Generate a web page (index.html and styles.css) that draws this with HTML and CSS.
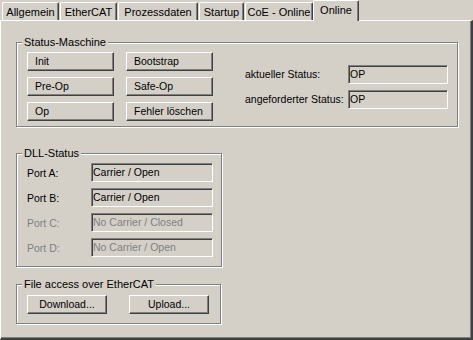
FILE: index.html
```html
<!DOCTYPE html>
<html>
<head>
<meta charset="utf-8">
<link rel="stylesheet" href="styles.css">
</head>
<body>
<div class="dialog">
  <div class="tabs">
    <div class="tab tab-allgemein">Allgemein</div>
    <div class="tab tab-ethercat">EtherCAT</div>
    <div class="tab tab-prozess">Prozessdaten</div>
    <div class="tab tab-startup">Startup</div>
    <div class="tab tab-coe">CoE - Online</div>
    <div class="tab tab-online active">Online</div>
  </div>
  <div class="panel">
    <fieldset class="group group-status">
      <legend>Status-Maschine</legend>
      <div class="status-body">
        <div class="btn-grid">
          <button class="btn">Init</button>
          <button class="btn">Bootstrap</button>
          <button class="btn">Pre-Op</button>
          <button class="btn">Safe-Op</button>
          <button class="btn">Op</button>
          <button class="btn">Fehler löschen</button>
        </div>
        <div class="status-fields">
          <span class="lbl">aktueller Status:</span>
          <div class="field">OP</div>
          <span class="lbl">angeforderter Status:</span>
          <div class="field">OP</div>
        </div>
      </div>
    </fieldset>

    <fieldset class="group group-dll">
      <legend>DLL-Status</legend>
      <div class="ports">
        <span class="lbl">Port A:</span>
        <div class="field">Carrier / Open</div>
        <span class="lbl">Port B:</span>
        <div class="field">Carrier / Open</div>
        <span class="lbl disabled">Port C:</span>
        <div class="field disabled">No Carrier / Closed</div>
        <span class="lbl disabled">Port D:</span>
        <div class="field disabled">No Carrier / Open</div>
      </div>
    </fieldset>

    <fieldset class="group group-file">
      <legend>File access over EtherCAT</legend>
      <div class="file-body">
        <button class="btn btn-center">Download...</button>
        <button class="btn btn-center">Upload...</button>
      </div>
    </fieldset>
  </div>
</div>
</body>
</html>
```
FILE: styles.css
```css
html, body {
  margin: 0;
  padding: 0;
  background: #D4D0C8;
}

body {
  font-family: "Liberation Sans", Arial, sans-serif;
  font-size: 10.5px;
  color: #000;
}

.dialog {
  width: 473px;
  height: 340px;
  display: flex;
  flex-direction: column;
}

/* ---------- tabs ---------- */
.tabs {
  display: flex;
  align-items: flex-end;
  height: 20px;
  padding-left: 2px;
  position: relative;
  z-index: 2;
}

.tab {
  box-sizing: border-box;
  height: 18px;
  margin-right: 1px;
  padding-top: 3px;
  line-height: 13px;
  font-size: 11px;
  text-align: center;
  white-space: nowrap;
  border-left: 1px solid #fff;
  border-top: 1px solid #fff;
  border-right: 1px solid #404040;
  border-radius: 2px 2px 0 0;
  box-shadow: inset -1px 0 0 #808080;
  background: #D4D0C8;
}

.tab-allgemein { width: 57px; }
.tab-ethercat { width: 57px; }
.tab-prozess { width: 80px; }
.tab-startup { width: 45px; }
.tab-coe { width: 68px; margin-right: 0; }
.tab-online { width: 46px; }

.tab.active {
  height: 21px;
  margin-bottom: -1px;
}

/* ---------- panel ---------- */
.panel {
  box-sizing: border-box;
  flex: 1;
  width: 473px;
  padding: 15px 0 0 15px;
  border-left: 1px solid #fff;
  border-top: 1px solid #fff;
  border-right: 2px solid #404040;
  border-bottom: 2px solid #404040;
  box-shadow: inset -1px -1px 0 #808080;
  display: flex;
  flex-direction: column;
  align-items: flex-start;
}

/* ---------- group boxes ---------- */
.group {
  box-sizing: border-box;
  margin: 0;
  min-width: 0;
  padding: 0 0 5px 5px;
  border: 1px solid #808080;
  box-shadow: inset 1px 1px 0 #fff, 1px 1px 0 #fff;
}

.group legend {
  padding: 0 2px;
  line-height: 13px;
  font-size: 11px;
  background: #D4D0C8;
}

.group-status {
  width: 442px;
}

.group-dll {
  width: 206px;
  margin-top: 20px;
  padding-bottom: 9px;
}

.group-file {
  width: 205px;
  margin-top: 11px;
  padding-bottom: 9px;
}

/* ---------- status machine ---------- */
.status-body {
  display: flex;
  align-items: center;
  padding: 3px 0 0 5px;
}

.btn-grid {
  display: grid;
  grid-template-columns: 87px 87px;
  grid-auto-rows: 19px;
  column-gap: 12px;
  row-gap: 6px;
}

.btn {
  box-sizing: border-box;
  margin: 0;
  height: 19px;
  padding: 0 0 0 7px;
  font: inherit;
  color: #000;
  text-align: left;
  line-height: 17px;
  background: #D4D0C8;
  border-left: 1px solid #fff;
  border-top: 1px solid #fff;
  border-right: 1px solid #404040;
  border-bottom: 1px solid #404040;
  border-radius: 0;
  box-shadow: inset -1px -1px 0 #808080;
}

.btn-center {
  width: 80px;
  padding: 0;
  text-align: center;
}

.status-fields {
  display: grid;
  grid-template-columns: 103px 100px;
  grid-auto-rows: 19px;
  row-gap: 6px;
  align-items: center;
  margin-left: 32px;
}

.lbl {
  white-space: nowrap;
}

.field {
  box-sizing: border-box;
  height: 19px;
  padding-left: 1px;
  line-height: 17px;
  white-space: nowrap;
  overflow: hidden;
  background: #D4D0C8;
  border-left: 1px solid #808080;
  border-top: 1px solid #808080;
  border-right: 1px solid #fff;
  border-bottom: 1px solid #fff;
  box-shadow: inset 1px 1px 0 #404040;
}

.disabled {
  color: #808080;
}

/* ---------- DLL status ---------- */
.ports {
  display: grid;
  grid-template-columns: 64px 122px;
  grid-auto-rows: 19px;
  row-gap: 6px;
  align-items: center;
  padding: 3px 0 0 5px;
}

/* ---------- file access ---------- */
.file-body {
  display: flex;
  column-gap: 22px;
  padding: 4px 0 0 5px;
}
```
